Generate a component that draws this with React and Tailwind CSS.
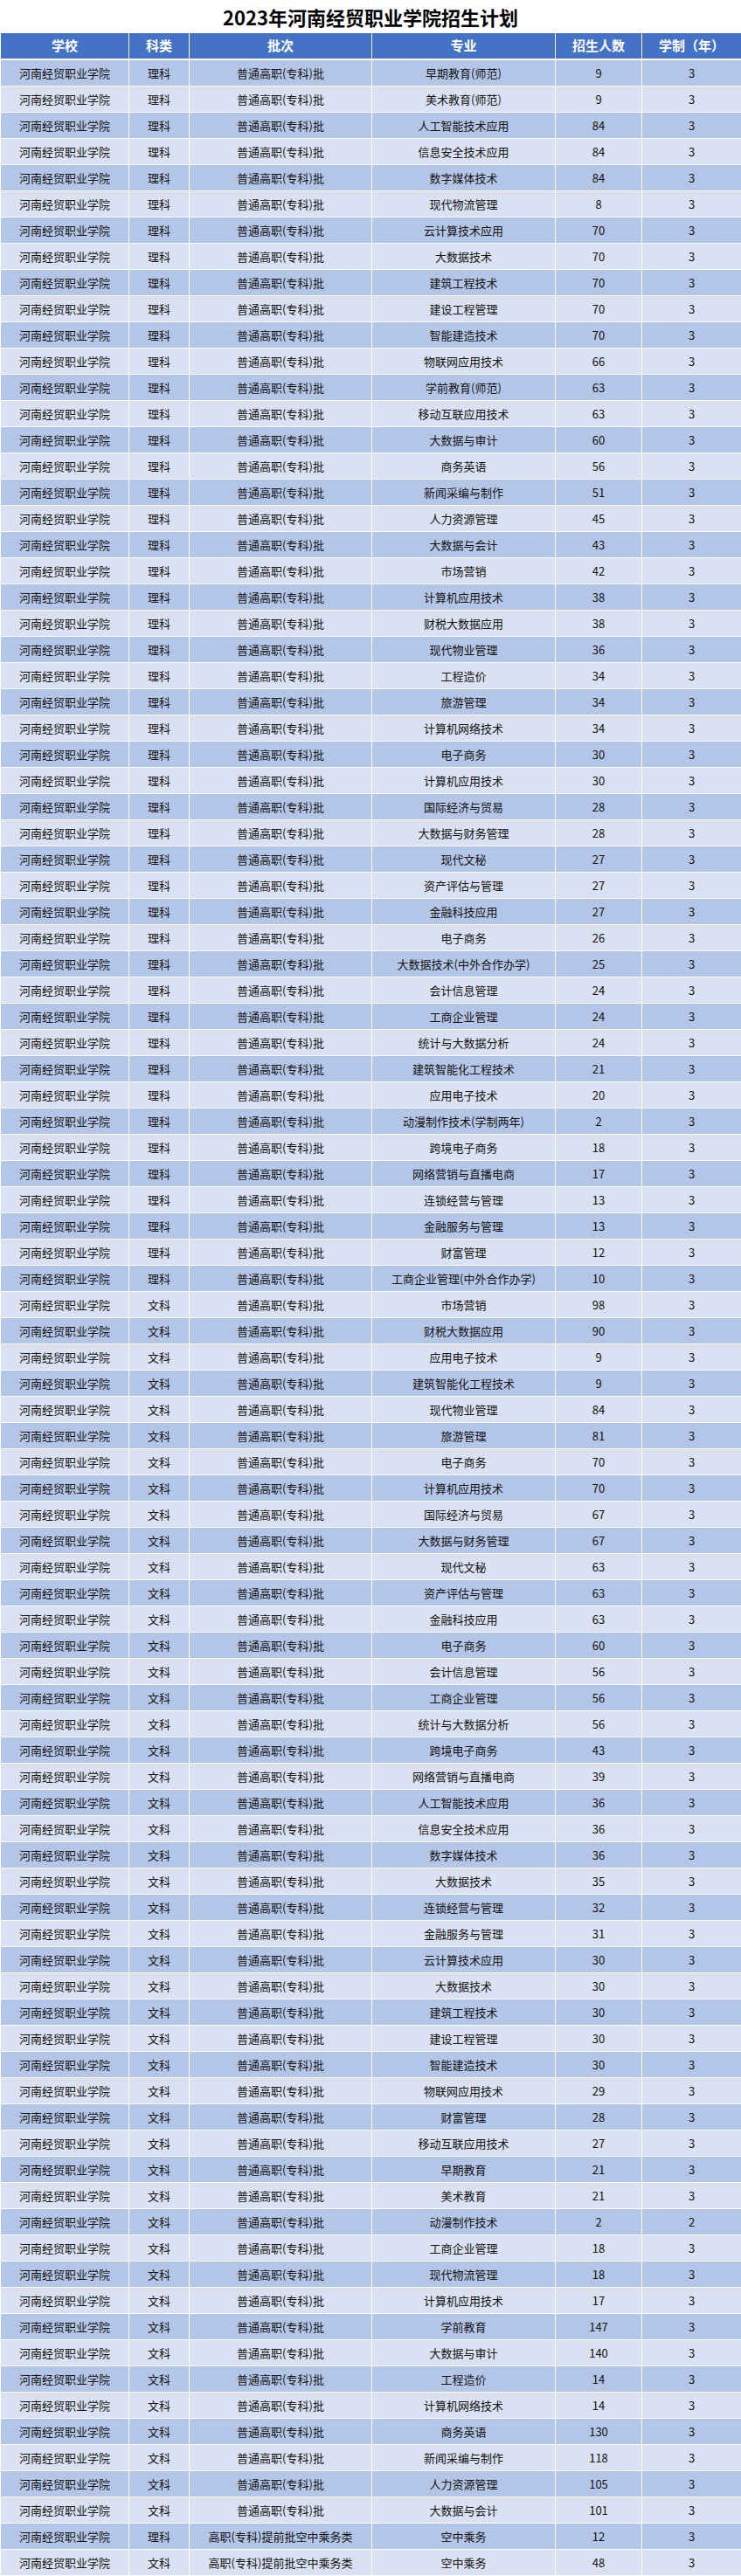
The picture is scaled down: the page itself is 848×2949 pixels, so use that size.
import React from "react";

const SCHOOL = "河南经贸职业学院";
const BATCH = "普通高职(专科)批";
const EARLY = "高职(专科)提前批空中乘务类";

// [科类, 专业, 招生人数, 学制, 批次]
const rows = [
  ["理科", "早期教育(师范)", 9],
  ["理科", "美术教育(师范)", 9],
  ["理科", "人工智能技术应用", 84],
  ["理科", "信息安全技术应用", 84],
  ["理科", "数字媒体技术", 84],
  ["理科", "现代物流管理", 8],
  ["理科", "云计算技术应用", 70],
  ["理科", "大数据技术", 70],
  ["理科", "建筑工程技术", 70],
  ["理科", "建设工程管理", 70],
  ["理科", "智能建造技术", 70],
  ["理科", "物联网应用技术", 66],
  ["理科", "学前教育(师范)", 63],
  ["理科", "移动互联应用技术", 63],
  ["理科", "大数据与审计", 60],
  ["理科", "商务英语", 56],
  ["理科", "新闻采编与制作", 51],
  ["理科", "人力资源管理", 45],
  ["理科", "大数据与会计", 43],
  ["理科", "市场营销", 42],
  ["理科", "计算机应用技术", 38],
  ["理科", "财税大数据应用", 38],
  ["理科", "现代物业管理", 36],
  ["理科", "工程造价", 34],
  ["理科", "旅游管理", 34],
  ["理科", "计算机网络技术", 34],
  ["理科", "电子商务", 30],
  ["理科", "计算机应用技术", 30],
  ["理科", "国际经济与贸易", 28],
  ["理科", "大数据与财务管理", 28],
  ["理科", "现代文秘", 27],
  ["理科", "资产评估与管理", 27],
  ["理科", "金融科技应用", 27],
  ["理科", "电子商务", 26],
  ["理科", "大数据技术(中外合作办学)", 25],
  ["理科", "会计信息管理", 24],
  ["理科", "工商企业管理", 24],
  ["理科", "统计与大数据分析", 24],
  ["理科", "建筑智能化工程技术", 21],
  ["理科", "应用电子技术", 20],
  ["理科", "动漫制作技术(学制两年)", 2],
  ["理科", "跨境电子商务", 18],
  ["理科", "网络营销与直播电商", 17],
  ["理科", "连锁经营与管理", 13],
  ["理科", "金融服务与管理", 13],
  ["理科", "财富管理", 12],
  ["理科", "工商企业管理(中外合作办学)", 10],
  ["文科", "市场营销", 98],
  ["文科", "财税大数据应用", 90],
  ["文科", "应用电子技术", 9],
  ["文科", "建筑智能化工程技术", 9],
  ["文科", "现代物业管理", 84],
  ["文科", "旅游管理", 81],
  ["文科", "电子商务", 70],
  ["文科", "计算机应用技术", 70],
  ["文科", "国际经济与贸易", 67],
  ["文科", "大数据与财务管理", 67],
  ["文科", "现代文秘", 63],
  ["文科", "资产评估与管理", 63],
  ["文科", "金融科技应用", 63],
  ["文科", "电子商务", 60],
  ["文科", "会计信息管理", 56],
  ["文科", "工商企业管理", 56],
  ["文科", "统计与大数据分析", 56],
  ["文科", "跨境电子商务", 43],
  ["文科", "网络营销与直播电商", 39],
  ["文科", "人工智能技术应用", 36],
  ["文科", "信息安全技术应用", 36],
  ["文科", "数字媒体技术", 36],
  ["文科", "大数据技术", 35],
  ["文科", "连锁经营与管理", 32],
  ["文科", "金融服务与管理", 31],
  ["文科", "云计算技术应用", 30],
  ["文科", "大数据技术", 30],
  ["文科", "建筑工程技术", 30],
  ["文科", "建设工程管理", 30],
  ["文科", "智能建造技术", 30],
  ["文科", "物联网应用技术", 29],
  ["文科", "财富管理", 28],
  ["文科", "移动互联应用技术", 27],
  ["文科", "早期教育", 21],
  ["文科", "美术教育", 21],
  ["文科", "动漫制作技术", 2, 2],
  ["文科", "工商企业管理", 18],
  ["文科", "现代物流管理", 18],
  ["文科", "计算机应用技术", 17],
  ["文科", "学前教育", 147],
  ["文科", "大数据与审计", 140],
  ["文科", "工程造价", 14],
  ["文科", "计算机网络技术", 14],
  ["文科", "商务英语", 130],
  ["文科", "新闻采编与制作", 118],
  ["文科", "人力资源管理", 105],
  ["文科", "大数据与会计", 101],
  ["理科", "空中乘务", 12, 3, EARLY],
  ["文科", "空中乘务", 48, 3, EARLY],
];

const headers = ["学校", "科类", "批次", "专业", "招生人数", "学制（年）"];

const gridCols =
  "grid grid-cols-[146px_68px_208px_209px_98px_113px] gap-x-px pl-px";

const font = {
  fontFamily: '"Noto Sans CJK SC", "Noto Sans", sans-serif',
};

export default function App() {
  return (
    <div className="w-[848px] bg-white" style={font}>
      {/* 标题 */}
      <div className="flex h-[38px] items-center justify-center text-[22px] font-bold leading-none text-black">
        2023年河南经贸职业学院招生计划
      </div>

      {/* 表头 */}
      <div className={gridCols + " h-[29px]"}>
        {headers.map((h) => (
          <div
            key={h}
            className="flex items-center justify-center bg-[#4472C4] text-[15px] font-bold text-white"
          >
            {h}
          </div>
        ))}
      </div>

      {/* 数据 */}
      <div className="mt-[2px] flex flex-col gap-y-px pb-px">
        {rows.map((r, i) => {
          const [kind, major, count, years = 3, batch = BATCH] = r;
          const bg = i % 2 === 0 ? "bg-[#B4C6E7]" : "bg-[#D9E1F2]";
          const cells = [SCHOOL, kind, batch, major, count, years];
          return (
            <div key={i} className={gridCols + " h-[29px]"}>
              {cells.map((c, j) => (
                <div
                  key={j}
                  className={
                    bg +
                    " flex items-center justify-center whitespace-nowrap text-[13px] text-[#111]"
                  }
                >
                  {c}
                </div>
              ))}
            </div>
          );
        })}
      </div>
    </div>
  );
}
